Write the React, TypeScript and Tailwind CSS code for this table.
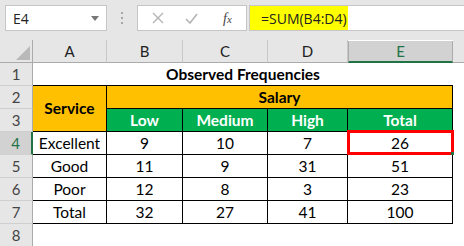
import React from 'react';

const sheetFont = { fontFamily: 'Lato, "Open Sans", sans-serif' };

const cols = ['A', 'B', 'C', 'D', 'E'];

const dataRows = [
  { n: 4, cells: ['Excellent', '9', '10', '7', '26'] },
  { n: 5, cells: ['Good', '11', '9', '31', '51'] },
  { n: 6, cells: ['Poor', '12', '8', '3', '23'] },
  { n: 7, cells: ['Total', '32', '27', '41', '100'] },
];

function RowHeader({ n, selected = false }: { n: number; selected?: boolean }) {
  return (
    <div
      className={`flex items-center justify-center border-b border-b-[#cfcfcf] text-[15px] ${
        selected
          ? 'bg-[#d2d2d2] text-[#217346] border-r-2 border-r-[#217346]'
          : 'bg-[#e6e6e6] text-[#444] border-r border-r-[#ababab]'
      }`}
    >
      {n}
    </div>
  );
}

function FormulaBar() {
  return (
    <div
      className="flex h-[40px] items-start bg-[#e6e6e6] pt-[5px]"
      style={{ fontFamily: '"Open Sans", "Noto Sans", sans-serif' }}
    >
      {/* name box */}
      <div className="ml-[5px] flex h-[26px] w-[102px] items-center justify-between border border-[#c6c6c6] bg-white pl-[7px] pr-[7px]">
        <span className="text-[14px] text-[#222]">E4</span>
        <svg width="8" height="5" viewBox="0 0 8 5">
          <path d="M0 0h8L4 5z" fill="#777" />
        </svg>
      </div>
      {/* grip dots */}
      <div className="flex h-[26px] w-[30px] flex-col items-center justify-center gap-[3px]">
        <span className="h-[2px] w-[2px] bg-[#a6a6a6]" />
        <span className="h-[2px] w-[2px] bg-[#a6a6a6]" />
        <span className="h-[2px] w-[2px] bg-[#a6a6a6]" />
      </div>
      {/* cancel / enter / fx */}
      <div className="flex h-[26px] w-[110px] items-center border border-[#c6c6c6] bg-white">
        <svg className="ml-[14px]" width="12" height="12" viewBox="0 0 12 12">
          <path d="M1 1l10 10M11 1L1 11" stroke="#b4b4b4" strokeWidth="1.4" />
        </svg>
        <svg className="ml-[21px]" width="13" height="11" viewBox="0 0 13 11">
          <path d="M1 6l4 4 7-9" stroke="#b4b4b4" strokeWidth="1.6" fill="none" />
        </svg>
        <span
          className="ml-[25px] text-[14px] italic text-[#444]"
          style={{ fontFamily: '"Liberation Serif", serif' }}
        >
          f<span className="text-[11px]">x</span>
        </span>
      </div>
      {/* formula input */}
      <div className="ml-[2px] flex h-[26px] flex-1 border border-r-0 border-[#c6c6c6] bg-white">
        <div className="flex w-[98px] items-center bg-[#ffff00] pl-[11px] text-[14px] text-[#222]">
          =SUM(B4:D4)
        </div>
      </div>
    </div>
  );
}

export default function App() {
  return (
    <div className="h-[246px] w-[464px] overflow-hidden bg-white" style={sheetFont}>
      <FormulaBar />
      <div className="grid grid-cols-[33px_74px_76px_85px_80px_105px_1fr] auto-rows-[23px]">
        {/* column headers */}
        <div className="relative border-b border-r border-[#ababab] bg-[#e6e6e6]">
          <svg className="absolute left-[16px] top-[6px]" width="14" height="14" viewBox="0 0 14 14">
            <path d="M14 0v14H0z" fill="#b9b9b9" />
          </svg>
        </div>
        {cols.map((c) =>
          c === 'E' ? (
            <div
              key={c}
              className="mt-[1px] flex items-center justify-center border-x border-[#ababab] border-b-2 border-b-[#217346] bg-[#d2d2d2] text-[15px] text-[#217346]"
            >
              {c}
            </div>
          ) : (
            <div
              key={c}
              className="flex items-center justify-center border-b border-r border-b-[#ababab] border-r-[#c8c8c8] bg-[#e6e6e6] text-[15px] text-[#222]"
            >
              {c}
            </div>
          )
        )}
        <div className="border-b border-[#ababab] bg-[#e6e6e6]" />

        {/* row 1 */}
        <RowHeader n={1} />
        <div className="col-span-5 flex items-center justify-center border-b border-black pt-[1px] text-[15.5px] font-bold text-black">
          Observed Frequencies
        </div>
        <div />

        {/* rows 2-3 */}
        <RowHeader n={2} />
        <div className="row-span-2 flex items-center justify-center border-b border-r border-black bg-[#ffc000] text-[15.5px] font-bold text-black">
          Service
        </div>
        <div className="col-span-4 flex items-center justify-center border-b border-r border-black bg-[#ffc000] pt-[1px] text-[15.5px] font-bold text-black">
          Salary
        </div>
        <div />
        <RowHeader n={3} />
        {['Low', 'Medium', 'High', 'Total'].map((t) => (
          <div
            key={t}
            className="flex items-center justify-center border-b border-r border-black bg-[#00b050] pt-[1px] text-[15.5px] font-bold text-white"
          >
            {t}
          </div>
        ))}
        <div />

        {/* data rows */}
        {dataRows.map((r) => (
          <React.Fragment key={r.n}>
            <RowHeader n={r.n} selected={r.n === 4} />
            {r.cells.map((v, i) => (
              <div
                key={i}
                className="relative flex items-center justify-center border-b border-r border-black pt-[1px] text-[15.5px] text-black"
              >
                {v}
                {r.n === 4 && i === 4 && (
                  <div className="absolute -left-[1px] -top-[2px] h-[25px] w-[107px] border-[3px] border-[#ff0000]">
                    <span className="absolute -bottom-[3px] -right-[3px] h-[3px] w-[3px] bg-[#217346]" />
                  </div>
                )}
              </div>
            ))}
            <div />
          </React.Fragment>
        ))}

        {/* row 8 */}
        <RowHeader n={8} />
      </div>
    </div>
  );
}
